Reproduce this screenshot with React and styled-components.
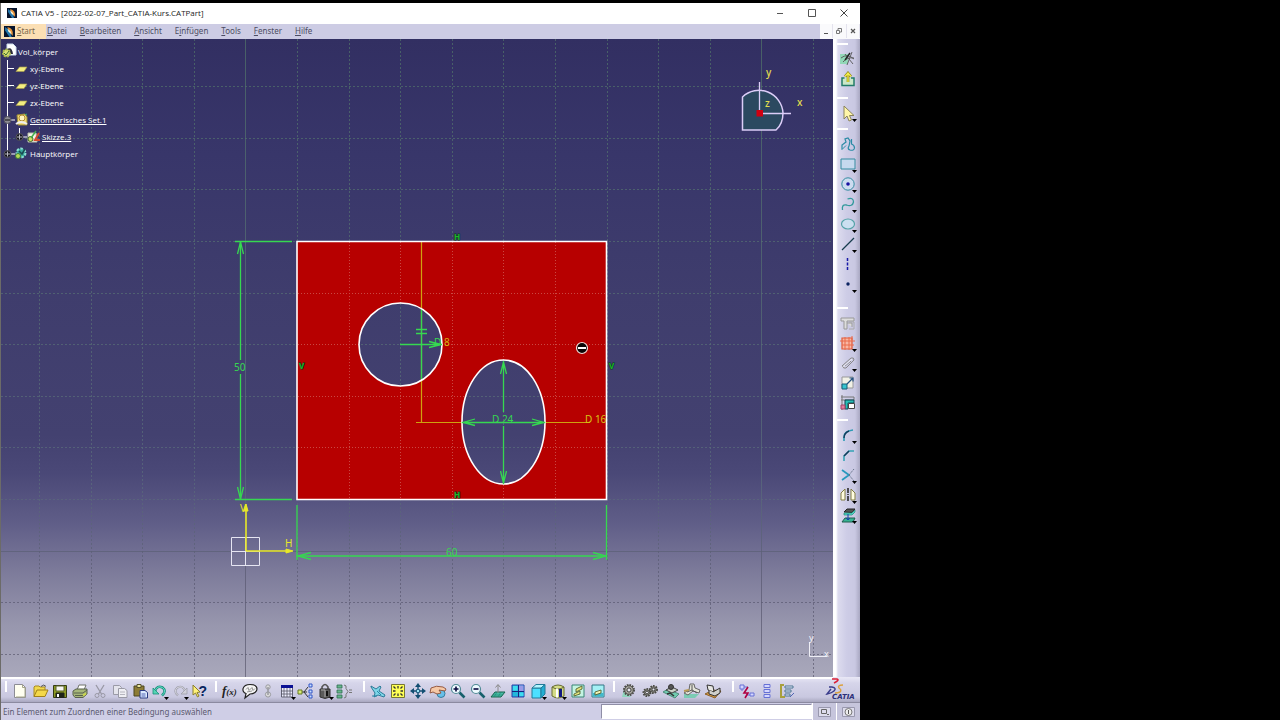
import React from "react";
import styled, { createGlobalStyle, css } from "styled-components";

const GlobalStyle = createGlobalStyle`
  * { box-sizing: border-box; }
  body { margin: 0; background: #000; font-family: "Noto Sans", "Open Sans", sans-serif; }
  button { font: inherit; color: inherit; background: none; border: 0; padding: 0; margin: 0; }
`;

const Desktop = styled.div`
  display: grid;
  grid-template-columns: 43fr 21fr;
  min-height: 100vh;
  padding-top: 3px;
  background: #000;
`;

const AppWindow = styled.div`
  display: flex;
  flex-direction: column;
  min-width: 0;
  border-left: 1px solid #6c6b68;
  background: #cfcee6;
`;

const TitleBar = styled.header`
  display: flex;
  align-items: center;
  height: 21px;
  padding: 0 0 2px 6px;
  gap: 4px;
  background: #fff;
  color: #222;
`;

const Title = styled.h1`
  flex: 1;
  margin: 0;
  font-family: "Open Sans", "Noto Sans", sans-serif;
  font-size: 8px;
  line-height: 12px;
  font-weight: 400;
  white-space: nowrap;
`;

const WindowControls = styled.div`
  display: flex;
`;

const WindowButton = styled.button`
  width: 32px;
  height: 19px;
  display: grid;
  place-items: center;
`;

const MenuBar = styled.nav`
  display: flex;
  height: 15px;
  background: #cdcce4;
  color: #4c4c62;
  font-size: 8px;
  line-height: 13px;
`;

const MenuList = styled.div`
  display: flex;
  flex: 1;
  gap: 13px;
`;

const MenuButton = styled.button`
  display: flex;
  align-items: flex-start;
  gap: 2px;
  white-space: pre;
  u { text-underline-offset: 1px; }
  ${(p) =>
    p.$active &&
    css`
      padding: 0 11px 0 3px;
      margin-right: -12px;
      background: #fbdfb4;
      color: #77664c;
      svg { margin-top: 2px; }
    `}
`;

const ChildControls = styled.div`
  display: flex;
  width: 40px;
  padding-bottom: 1px;
  background: #fafafc;
`;

const ChildButton = styled.button`
  flex: 1;
  display: grid;
  place-items: center;
  border-right: 1px solid #e4e3ee;
`;

const Workspace = styled.div`
  display: grid;
  grid-template-columns: minmax(0, 1fr) 27px;
  flex: 1;
  min-height: 638px;
`;

const Viewport = styled.main`
  position: relative;
  overflow: hidden;
  background: linear-gradient(
    #322f62 0%, #38366a 18%, #3f3d6d 40%, #434170 62%, #4a4877 68%,
    #605e88 76%, #7b7999 83%, #9897ae 92%, #a9a8bb 100%
  );
`;

const Drawing = styled.svg`
  display: block;
  width: 100%;
  height: 100%;
  text { font-family: "Noto Sans", "Open Sans", sans-serif; }
`;

const Tree = styled.ul`
  position: absolute;
  top: 4px;
  left: 0;
  margin: 0;
  padding: 0;
  list-style: none;
  color: #fff;
  font-family: "Open Sans", "Noto Sans", sans-serif;
  font-size: 8px;
  line-height: 15px;
`;

const Branch = styled.ul`
  margin: 0;
  padding: 0 0 0 ${(p) => (p.$nested ? 12 : 0)}px;
  list-style: none;
`;

const Node = styled.li`
  background: linear-gradient(#fff, #fff) 6px 0 / 1px ${(p) => (p.$last ? "50%" : "100%")} no-repeat;
  ${(p) => p.$root && css`background: none;`}
`;

const NodeRow = styled.div`
  display: flex;
  align-items: center;
  height: 17px;
  padding-left: ${(p) => (p.$root ? 0 : 2)}px;
`;

const NodeToggle = styled.button`
  width: 12px;
  height: 17px;
  display: grid;
  place-items: center start;
`;

const NodeTick = styled.span`
  width: 7px;
  height: 1px;
  margin: 0 1px 0 4px;
  background: #fff;
`;

const NodeIcon = styled.svg`
  flex: none;
  width: ${(p) => (p.$root ? 16 : 14)}px;
  height: 16px;
  margin-right: 1px;
  overflow: visible;
`;

const NodeLabel = styled.span`
  white-space: nowrap;
  text-decoration: ${(p) => (p.$underlined ? "underline" : "none")};
  text-underline-offset: 1px;
`;

const SideBar = styled.aside`
  display: grid;
  grid-template-rows: 54px 31px 179px 112px 1fr;
  padding-top: 4px;
  background: linear-gradient(90deg, #fff 0, #fff 3px, #dcdbee 5px, #cdcce6 14px, #c9c8e2 22px, #a9a8c2 27px);
`;

const SideGroup = styled.div`
  display: flex;
  flex-direction: column;
  padding: 6px 0 0 5px;
  background: linear-gradient(#fff, #fff) 4px 0 / 11px 2px no-repeat;
`;

const ToolBar = styled.div`
  display: grid;
  grid-template-columns: 210px 148px 250px 119px 1fr 32px;
  height: 26px;
  padding: 4px 2px 0 4px;
  border-bottom: 1px solid #8b8aa0;
  background:
    linear-gradient(#fff, #fff) 0 0 / calc(100% - 27px) 2px no-repeat,
    linear-gradient(#e9e8f6 0, #d6d5ea 6px, #c9c8e0 20px, #a9a8c0 25px);
`;

const ToolGroup = styled.div`
  display: flex;
  align-items: flex-start;
  padding-left: 5px;
  background: linear-gradient(#fff, #fff) 0 0 / 2px 11px no-repeat;
`;

const ToolButton = styled.button`
  display: grid;
  place-items: center;
  flex: none;
  width: ${(p) => p.$w || 20}px;
  height: 20px;
`;

const ToolIcon = styled.svg`
  display: block;
  width: 18px;
  height: 18px;
  overflow: visible;
`;

const Logo = styled.svg`
  width: 32px;
  height: 22px;
  overflow: visible;
`;

const StatusBar = styled.footer`
  display: flex;
  align-items: center;
  height: 17px;
  padding-left: 2px;
  background: #cfcee6;
  color: #5b5a70;
  font-size: 8px;
  line-height: 16px;
`;

const StatusText = styled.label`
  flex: 1;
  white-space: nowrap;
`;

const CommandInput = styled.input`
  flex: 0 1 211px;
  min-width: 0;
  height: 15px;
  padding: 0 4px;
  border: 1px solid #8f8ea6;
  border-right-color: #fff;
  border-bottom-color: #fff;
  background: #fff;
  font: inherit;
`;

const StatusButton = styled.button`
  display: grid;
  place-items: center;
  width: 24px;
  height: 17px;
  border-left: 1px solid #fff;
  background: #c6c5dc;
`;

/* Toolbar drawings, all on an 18 x 18 field */

const S = ({ c = "#222", w = 1, f = "none", d, ...rest }) => (
  <path d={d} stroke={c} strokeWidth={w} fill={f} {...rest} />
);

const Gear = ({ x, y, r }) => (
  <g>
    <circle cx={x} cy={y} r={r} fill="#c4c4bc" stroke="#4a4a46" strokeWidth="2" strokeDasharray="1.6 1" />
    <circle cx={x} cy={y} r={r - 0.8} fill="#b4b3aa" stroke="#4c4c48" strokeWidth="1" />
    <circle cx={x} cy={y} r={r / 2.4} fill="#e6e6ee" stroke="#3a3a38" />
  </g>
);

const Lens = ({ plus }) => (
  <g>
    <S d="M10.500 10.500l5 5" c="#17606c" w="2.6" />
    <circle cx="7" cy="7" r="4.5" fill="#eefaff" stroke="#4f8a94" strokeWidth="1.2" />
    <S d={plus ? "M4.500 7h5M7 4.500v5" : "M4.500 7h5"} c="#06063c" w="1.6" />
  </g>
);

const icons = {
  neu: <><S d="M3.500 2.500h8l3 3v10h-11z" f="#fffff0" c="#8c8c94" /><S d="M11.500 2.500v3h3M5 15h9V6" c="#a5a58a" /></>,
  open: <><S d="M3 14.500V5l1-1h4l1 1h5v3" f="#f1d94c" c="#a88a20" /><S d="M3 14.500l3-6.500h11l-3 6.500z" f="#f4d848" c="#a08018" /><S d="M10 4.500q3-3 5 0" c="#555" /></>,
  save: <><S d="M2.500 3.500h13v12h-13z" f="#8c9a23" c="#343b16" /><S d="M5 4h8v5H5z" f="#f5f5f0" c="#58602c" /><S d="M5 11h8v4.500H5z" f="#1e2418" c="#1e2418" /><S d="M7 12v3" c="#fff" w="2" /></>,
  print: <><S d="M6 8l2-5h7l-2 5z" f="#fff" c="#70746c" /><S d="M2 9l3-2h11v5l-4 3.500H4L2 13z" f="#a6b77a" c="#59614c" /><S d="M3 11h9l4-3M4 13.500h8" c="#59614c" /><S d="M12 13.500l3-2" c="#cdd84c" w="2" /></>,
  cut: <><S d="M5 3l5.500 9M13 3L7.500 12" c="#9998a5" w="1.300" /><circle cx="6" cy="13.500" r="2" stroke="#9998a5" fill="none" /><circle cx="12" cy="13.500" r="2" stroke="#9998a5" fill="none" /></>,
  copy: <><S d="M2.500 3.500h6l2 2v7h-8z" f="#e4e4ec" c="#9a9aa6" /><S d="M7.500 6.500h6l2.500 2v7H7.500z" f="#efeff4" c="#9a9aa6" /><S d="M9 10h5M9 12.500h5" c="#b5b5be" /></>,
  paste: <><S d="M3 4h10v10H3z" f="#8d7c35" c="#4d461f" /><S d="M6 2.500h4v3H6z" f="#ebe7a0" c="#55502c" /><S d="M9 8.500h5l2.500 2v5.500H9z" f="#dbe9ff" c="#2b3b83" /><S d="M10.500 12h4M10.500 14h4" c="#5265b5" /></>,
  undo: <><S d="M4 9q2-6 7.500-3.500Q16 9 11 13.500" c="#1a8f7c" w="2.600" /><S d="M4 9q2-6 7.500-3.500Q16 9 11 13.500" c="#67e2c9" /><S d="M2 6v6h6z" f="#56d6b5" c="#1a8f7c" w=".8" /></>,
  redo: <><S d="M14 9Q12 3 6.500 5.500 2 9 7 13.500" c="#9e9eaa" w="2.200" /><S d="M14 9Q12 3 6.500 5.500 2 9 7 13.500" c="#e3e3ec" w=".8" /><S d="M16 6v6h-6z" f="#d0d0da" c="#9e9eaa" w=".8" /></>,
  help: <><S d="M2 3v10l2.500-2 2 4 1.500-1-2-3.500 3-.5z" f="#fff27a" c="#8a7e30" /><text x="7.500" y="13.500" fontSize="14" fontWeight="700" fill="#07255f" fontFamily="Liberation Sans, sans-serif">?</text></>,

  formula: <text x="1" y="13" fontSize="13" fontStyle="italic" fontWeight="700" fill="#222" fontFamily="Liberation Serif, serif">f<tspan fontSize="9">(x)</tspan></text>,
  comment: <><S d="M10 2.500c5 0 7 2 7 4.500S14 12 10 12l-5 4 1-4.500C1 10 2 2.500 10 2.500z" f="#f5f5f5" c="#222" w="1.200" /><S d="M6 7.500l2-2 1 3 3-3 1 3 2-2M7 10l5-1" c="#777" w=".8" /></>,
  chain: <><circle cx="9" cy="5" r="2.200" fill="#ddd" stroke="#999aa0" /><circle cx="9" cy="12.500" r="2.600" fill="#ddd" stroke="#999aa0" /><S d="M9 5v8" c="#999aa0" w="1.500" /></>,
  table: <><S d="M3.500 4h11v11h-11z" f="#eef" c="#445" w=".8" /><S d="M3 4.500h12" c="#0a1094" w="3" /><S d="M3 9h12M3 12h12M6 6v9M9 6v9M12 6v9" c="#556" w=".8" /></>,
  relations: <><S d="M5 10h5M7 10l4-5M7 10l4 5" c="#333" /><S d="M1 8h4v4H1z" f="#d8ec76" c="#667b22" /><S d="M12 2h3v3h-3zM12 8h3v3h-3zM12 13h3v3h-3z" f="#cadfff" c="#3155c6" /></>,
  lock: <><S d="M6 8V5q3-5 6 0v3" c="#555" w="1.600" /><S d="M4 7h10v8l-5 1.500L4 15z" f="#5a5a5a" c="#333" /><S d="M5 8h4v7" c="#aaa" /><S d="M11 9v5" c="#111" w="2" /></>,
  struct: <><S d="M2 3h5v3H2zM2 8h5v3H2zM2 13h5v3H2z" f="#67b68c" c="#2d6c52" w=".8" /><S d="M9 3q3 0 2 3.500l2 3-2 3q1 3.500-2 3.500M14 8h3M14 10.500h3" c="#777" /></>,

  fly: <><S d="M2 4l5 3 4-3 1 1-2 4 6 4-1 2-6-2-4 2 1-4-4-6z" f="#7ed6e8" c="#206f8f" w=".9" /><S d="M3 14h5M8 9l4 4" c="#2a87a8" /></>,
  fit: <><S d="M2.500 2.500h13v13h-13z" f="#ffff55" c="#777733" /><S d="M4.500 4.500l2 2M13.500 4.500l-2 2M4.500 13.500l2-2M13.500 13.500l-2-2M9 4v2.500M9 11.500V14M4 9h2.500M11.500 9H14" c="#333" w="1.300" /></>,
  pan: <><S d="M9 3v12M3 9h12" c="#124e72" w="1.400" /><S d="M9 1l3 4H6zM9 17l3-4H6zM1 9l4-3v6zM17 9l-4-3v6z" f="#124e72" c="none" /><S d="M7.500 7.500h3v3h-3z" f="#9fe6f5" c="#124e72" w=".8" /></>,
  rotate: <><circle cx="12" cy="11.500" r="4" fill="#67bfe9" stroke="#347c9d" w=".8" /><S d="M2 6q5-3 12-1l3 2-1 2-6-1 2 3-4 1-4-2-3 1z" f="#f5c8a6" c="#8c4e35" w=".9" /></>,
  zoomIn: <Lens plus />,
  zoomOut: <Lens />,
  normal: <><S d="M2 15l4-5h10l-4 5z" f="#46bba4" c="#18634f" /><S d="M4 13h10M8 10l-3 5M12 10l-3 5" c="#1d8872" w=".6" /><S d="M9 11V3M6.500 5.500L9 2.500l2.500 3" c="#888" /></>,
  multi: <><S d="M3 3h12v12H3z" f="#22b8dc" c="#2a3fa8" /><S d="M10 3.500h4.500v6H10z" f="#9a9ae6" c="none" /><S d="M9.500 3v12M3 9.500h12" c="#17247f" /><S d="M4 4h4.500v4.500H4zM10.500 10.500h4V14h-4z" f="#3fdcf0" c="none" /></>,
  cube: <><S d="M3 6h9v10H3z" f="#4ce0ff" c="#237a98" /><S d="M3 6l4-3.500h9L12 6z" f="#b4f5ff" c="#237a98" /><S d="M12 6l4-3.500V12l-4 4z" f="#24aed2" c="#237a98" /></>,
  shade: <><S d="M3 5v9q6 4 12 0V5q-6-4-12 0z" f="#d4dc86" c="#676b35" /><S d="M3 5q6 4 12 0" c="#676b35" /><S d="M7 6.500h2v9H7z" f="#fff" c="none" /><S d="M10 7h3v8h-3z" f="#121880" c="none" /></>,
  hide: <><S d="M3 3h12v12H3z" f="#c4f4e2" c="#398577" /><S d="M7 7l6-3v3l-6 3zM5 12l6-3v3l-6 2z" f="#e6e67e" c="#53622f" w=".9" /></>,
  swap: <><S d="M3 3h12v12H3z" f="#a4f1f5" c="#347786" /><S d="M3.500 11h11v3.500h-11z" f="#42b8ca" c="none" /><S d="M6 10l6-2v3l-6 2z" f="#f2f3b2" c="#53622f" w=".9" /></>,

  gear: <><S d="M4 7l-2 8h9z" f="#8fd6bd" c="none" /><Gear x={9} y={8} r={5} /></>,
  gears: <><Gear x={6} y={10.5} r={3.5} /><Gear x={12.5} y={7.5} r={3.5} /></>,
  machine: <><S d="M1 10l5-3 11 5-4 4z" f="#70cbb0" c="#4f8c7b" /><S d="M4 8l6-3 6 3-6 3z" f="#ccd2c8" c="#444" /><circle cx="9" cy="5" r="2.500" fill="#555" stroke="#333" /><S d="M5 12l3-1 4 3" c="#333" w="1.500" /></>,
  assemble: <><S d="M1 12h15l-4 4H1z" f="#7cccb4" c="none" /><S d="M7 2h4l1 4 5 2-1 3-6-2-5 4-4-2 5-3z" f="#e3e4d8" c="#666" /><S d="M9 3v5M4 10l5-2 5 3" c="#555" /><S d="M1 9l5-1" c="#b79a55" w="2" /></>,
  part: <><S d="M1 12l8-4 8 1-6 7z" f="#d99a40" c="#8a6028" /><S d="M3 3l6 1 1 6-6-2z" f="#e6e6e2" c="#333" /><S d="M9 10l7-4v5l-5 3-6-2v-4" f="#cfcfca" c="#333" /></>,
  net: <><S d="M2 3h4v4H2zM12 11h4v3h-4z" f="#d5d7ff" c="#6671d5" /><S d="M6 5h4M4 7v2M8 13h4" c="#6671d5" /><S d="M10 5L6 11h4l-3 5" c="#b00040" w="1.600" /></>,
  stack: <S d="M6 2.500h6v3H6zM6 7.500h6v3H6zM6 12.500h6v3H6z" f="#d5d7ff" c="#6671d5" />,
  list: <><S d="M6 3H3v12h4" f="none" c="#a8a03c" w="2" /><S d="M7 4h8v2H7zM7 8h6v2H7zM7 12h5v2H7z" f="#e8ecff" c="#4a7590" /><S d="M12 15l4-4" c="#5165b5" /></>,

  sketch: <><S d="M1 4h8v10H1z" f="#92d8b8" c="none" /><S d="M2 8q6-5 13 1M4 12q4-5 11-4M13 2L8 15M6 4l8 10" c="#555" w=".9" /><S d="M11 3l-5 7" c="#222" w="1.400" /></>,
  exit: <><S d="M5.500 8H3v7.500h12V8h-3" f="#cbe8c8" c="#237c6a" w="1.500" /><S d="M9 12V4M6 6.500L9 3l3 3.500" c="#877d0e" w="2.600" /><S d="M9 12V4M6 6.500L9 3l3 3.500" c="#f3ee4c" w="1.300" /></>,
  select: <S d="M5 2v13l3-3 2 5 2.500-1-2-4.500H15z" f="#fff6a8" c="#8a835d" />,
  profile: <><S d="M3 14.500V10l4-3-1-3 3-1 2 3-1 5q-2 3 1 4 4 1 4.500-2 0-3-3-4V4" c="#2a8ba5" w="1.200" /><S d="M3 14.500l4-4" c="#2a8ba5" /></>,
  rect: <S d="M2 4h14v10H2z" f="#c6d9ee" c="#348ba0" />,
  circle: <><circle cx="9" cy="9" r="6.200" fill="#cddcf0" stroke="#348ba0" /><circle cx="9" cy="9" r="1.800" fill="#1810a0" /></>,
  spline: <S d="M3.500 15q-1-6 4-5 6 2 7-3 0-5-6-3" c="#339a9c" w="1.300" />,
  ellipse: <ellipse cx="9" cy="9" rx="6.500" ry="5" fill="#cbdff0" stroke="#55a3a8" strokeWidth="1.200" />,
  line: <S d="M3 15L15 3" c="#173c4d" w="1.300" />,
  axis: <S d="M8.500 3v3M8.500 7.500v3M8.500 12v3" c="#1718a8" w="1.500" />,
  point: <circle cx="9" cy="9" r="1.700" fill="#0b2360" />,
  constraint: <><S d="M2 4h13v3H8v8H5V7H2zM8 9h5v4" c="#999" f="#ddd" /><S d="M10 8h5v7h-5" c="#aaa" /></>,
  anchor: <><S d="M3 4h10v11H3z" f="#f8b7a4" c="#e05a3a" w="1.200" /><S d="M1 7h15M6 3v13M10 3v13M3 11h12M13 2v4" c="#ea6b4a" /></>,
  clip: <><S d="M3 12L12 4q3-1 3 2L7 14q-3 1-3-2zM6 12l6-5" c="#888" /><S d="M4 13l9-8" c="#f2f2f6" w=".8" /></>,
  project: <><S d="M3 3h11v11H3z" f="#f1f1e6" c="#999" /><S d="M3 10h5v5H3z" f="#35c4ce" c="#175e78" /><S d="M8 10l6-6M10.500 4H14v3.500" c="#225080" w="1.200" /></>,
  analyse: <><S d="M2 3h13M2 6h13M3 1v15M15 3v3" c="#777" /><S d="M6 6h9v3H9v6H6z" f="#28bfb5" c="#145" /><S d="M9.500 9.500h6v5h-6z" f="#fff" c="#444" /><S d="M2 11h4v4H2z" f="#e37c9c" c="#a34468" /></>,
  corner: <><S d="M5 15V11q0-6 9-7" c="#2d9bb5" w="1.600" /><S d="M5 12q0-5 5-7" c="#123c5c" w="1.400" /></>,
  chamfer: <><S d="M5 15v-5l5-5h5" c="#36a3b5" w="1.600" /><S d="M5 10l5-5" c="#173959" w="1.400" /></>,
  trim: <><S d="M3 4l7 5-7 5" c="#2798bd" w="1.700" /><S d="M10 9l5-6M10 9l5 6" c="#68748b" strokeDasharray="2 1" /></>,
  mirror: <><S d="M2 14V7l4-4v11zM16 14V7l-4-4v11z" f="#fffce0" c="#817c45" /><S d="M9 2v14" c="#222" w="1.500" strokeDasharray="5 1 1 1" /></>,
  offset: <><S d="M3 16l3-4h10l-2 4z" f="#37b393" c="#205e4f" /><S d="M5 6l3-3h8l-3 3.500z" f="#555" c="#222" /><S d="M5 7h8l3-3v2l-3 3H5z" f="#52dccb" c="#287" w=".7" /><S d="M9 8v6M7 12l2 2 2-2" c="#1640b0" /></>,
};

const MORE = new Set([
  "undo", "redo", "table", "lock", "cube", "shade", "select", "rect", "circle",
  "spline", "ellipse", "line", "point", "anchor", "clip", "corner", "trim", "mirror", "offset",
]);

const Tool = ({ name, width }) => (
  <ToolButton type="button" aria-label={name} $w={width}>
    <ToolIcon viewBox="0 0 18 18" aria-hidden="true">
      {icons[name]}
      {MORE.has(name) && <path d="M13 15h5l-2.500 3z" fill="#000" />}
    </ToolIcon>
  </ToolButton>
);

const bottomGroups = [
  [20, ["neu", "open", "save", "print", "cut", "copy", "paste", "undo", "redo", "help"]],
  [19, ["formula", "comment", "chain", "table", "relations", "lock", "struct"]],
  [20, ["fly", "fit", "pan", "rotate", "zoomIn", "zoomOut", "normal", "multi", "cube", "shade", "hide", "swap"]],
  [21, ["gear", "gears", "machine", "assemble", "part"]],
  [20, ["net", "stack", "list"]],
];

const sideGroups = [
  ["sketch", "exit"],
  ["select"],
  ["profile", "rect", "circle", "spline", "ellipse", "line", "axis", "point"],
  ["constraint", "anchor", "clip", "project", "analyse"],
  ["corner", "chamfer", "trim", "mirror", "offset"],
];

const AppIcon = ({ size = 10 }) => (
  <svg width={size} height={size} viewBox="0 0 10 10" aria-hidden="true">
    <rect width="10" height="10" fill="#07142c" />
    <path d="M1 1l4 3 2 6H5L1 4z" fill="#2378ae" />
    <path d="M3 1q6 1 5 8L5 5z" fill="#e8943a" />
    <path d="M3 2l3 3 1 3-3-3z" fill="#fff6d8" />
  </svg>
);

/* Specification tree */

const treeIcons = {
  part: (
    <>
      <path d="M6 0h6l3 3v8H6z" fill="#fff" stroke="#cfe0ee" />
      <path d="M6 5q5-3 6 5H8z" fill="#2c2c3c" />
      <circle cx="5.500" cy="9" r="3.500" fill="#d8df72" stroke="#a9b84a" strokeWidth="2" strokeDasharray="2 1" />
      <path d="M3 9l2 2 3-4" stroke="#3e6c31" fill="none" />
    </>
  ),
  plane: <path d="M4.500 6h7.500l-3 4.500H1z" fill="#f4ee80" stroke="#a3994d" strokeWidth=".7" />,
  set: (
    <>
      <path d="M2 3l8-1 2 3v8H3z" fill="#f6dd77" stroke="#9b8a34" />
      <circle cx="7" cy="6" r="3" fill="#fff3c0" stroke="#b28a30" />
      <path d="M1 12q5-4 11 0" stroke="#eee" strokeWidth="2" fill="none" />
      <path d="M10 3l2-1" stroke="#3cb371" />
    </>
  ),
  sketch: (
    <>
      <path d="M1 4h8l1 9H1z" fill="#f4f4e8" stroke="#b9bfa9" />
      <path d="M12 4L8 11h5" stroke="#d44b30" strokeWidth="2" fill="none" />
      <circle cx="3.500" cy="10" r="2.500" fill="#cfdd66" stroke="#416b2a" />
      <path d="M4 9l5-7" stroke="#3fae4c" strokeWidth="1.500" />
    </>
  ),
  body: (
    <>
      <circle cx="6" cy="7" r="4.500" fill="#39a79b" stroke="#8ee0d2" strokeWidth="2" strokeDasharray="2.500 1.500" />
      <path d="M4 5l3 3 3-5" stroke="#184a52" strokeWidth="1.500" fill="none" />
      <circle cx="3" cy="10" r="2.500" fill="#b5db55" stroke="#3b7a38" />
    </>
  ),
};

const Expander = ({ open, label }) => (
  <NodeToggle type="button" aria-label={label} aria-expanded={open}>
    <svg width="12" height="10" viewBox="0 0 12 10" aria-hidden="true">
      <path d="M7 5h5" stroke="#fff" />
      <circle cx="4.500" cy="5" r="3.500" fill={open ? "#8a8a92" : "#15151f"} stroke="#55555f" />
      <path d={open ? "M2 5h5" : "M2 5h5M4.500 2.500v5"} stroke={open ? "#111" : "#b8b8c0"} />
    </svg>
  </NodeToggle>
);

const TreeItem = ({ icon, label, last, underlined, open, leaf, children }) => (
  <Node $last={last}>
    <NodeRow>
      {leaf ? <NodeTick /> : <Expander open={!!open} label={label} />}
      <NodeIcon viewBox="0 0 14 16" aria-hidden="true">{treeIcons[icon]}</NodeIcon>
      <NodeLabel $underlined={underlined}>{label}</NodeLabel>
    </NodeRow>
    {children}
  </Node>
);

/* Sketch geometry */

const STEP = 51.6;
const columns = Array.from({ length: 16 }, (_, i) => Math.floor(39.4 + i * STEP) + 0.5);
const rows = Array.from({ length: 12 }, (_, i) => Math.round(86.2 + i * STEP) + 0.5);
const GREEN = "#36d850";
const PLATE = "M297 241.500h309.500v258H297z";
const CIRCLE = "M359 344.500a41.500 41.500 0 1 0 83 0a41.500 41.500 0 1 0 -83 0z";
const OVAL = "M462 422a41.500 62 0 1 0 83 0a41.500 62 0 1 0 -83 0z";

const SketchView = () => (
  <Drawing viewBox="1 39 832 638" preserveAspectRatio="xMinYMin slice" role="img" aria-label="Skizze.3">
    <defs>
      <linearGradient id="gridInk" gradientUnits="userSpaceOnUse" x1="0" y1="39" x2="0" y2="677">
        <stop offset="0" stopColor="#4f7068" />
        <stop offset="0.700" stopColor="#5a6a7c" />
        <stop offset="0.850" stopColor="#5c5b74" />
        <stop offset="1" stopColor="#5f5e72" />
      </linearGradient>
      <clipPath id="plateClip">
        <path d={PLATE + CIRCLE + OVAL} clipRule="evenodd" />
      </clipPath>
    </defs>

    <path d={PLATE + CIRCLE + OVAL} fill="#b70000" fillRule="evenodd" />
    <g fill="none" stroke="url(#gridInk)">
      {columns.map((x, i) => (
        <path key={x} d={`M${x} 39L${x + 0.01} 677`} strokeDasharray={i === 4 || i === 14 ? "none" : "2 2"} opacity=".75" />
      ))}
      {rows.map((y, i) => (
        <path key={y} d={`M1 ${y}L833 ${y + 0.01}`} strokeDasharray={i === 9 ? "none" : "2 2"} opacity=".75" />
      ))}
    </g>
    <g clipPath="url(#plateClip)">
      <path d={PLATE} fill="#b70000" />
      <g stroke="#d77a70" strokeDasharray="1 2" opacity=".6">
        {columns.slice(6, 11).map((x) => <path key={x} d={`M${x} 242V499`} />)}
        {rows.slice(4, 8).map((y) => <path key={y} d={`M298 ${y}H606`} />)}
      </g>
    </g>
    <path d="M421.500 242V422.500M416 422.500H462M545 422.500H590" stroke="#cfa210" strokeWidth="1.200" />
    <path d="M421.500 309V379" stroke={GREEN} strokeWidth="1.300" />
    <path d={PLATE + CIRCLE + OVAL} fill="none" stroke="#fff" strokeWidth="1.600" />

    <g stroke={GREEN} fill="none" strokeWidth="1.300">
      <path d="M235 241.500H292M235 499.500H292M240.500 241V360M240.500 374V499" />
      <path d="M237.500 254L240.500 242L243.500 254M237.500 487L240.500 499L243.500 487" />
      <path d="M297 505V560M606.500 505V560M297 556H606" />
      <path d="M311 552.500L298 556L311 559.500M593 552.500L606 556L593 559.500" />
      <path d="M400 344.500H442M429 341.500L441 344.500L429 347.500" />
      <path d="M416 329.500H427M416 333.500H427" strokeWidth="1.500" />
      <path d="M462 422.500H545M475 419L463 422.500L475 425.500M532 419L544 422.500L532 425.500" />
      <path d="M503.500 361V412M503.500 426V484M500.500 374L503.500 362L506.500 374M500.500 471L503.500 483L506.500 471" />
    </g>

    <g fill={GREEN} fontSize="10">
      <text x="234" y="371">50</text>
      <text x="446" y="556">60</text>
      <text x="492" y="423">D 24</text>
      <text x="434" y="346">D <tspan fill="#d6b410">8</tspan></text>
      <text x="585" y="423" fill="#d6c514">D 16</text>
    </g>
    <g fill="#1fb52c" stroke="#073d18" strokeWidth="1" paintOrder="stroke" fontSize="8" fontWeight="700">
      <text x="454" y="240">H</text>
      <text x="454" y="498">H</text>
      <text x="299" y="369">V</text>
      <text x="609" y="369">V</text>
    </g>

    <path d="M231.500 537.500H259.500V565.500H231.500zM245.500 537V565M231 551.500H259" stroke="#e6e5f2" fill="none" />
    <g stroke="#e8e828" fill="#e8e828">
      <path d="M246 551V506M246 551H291" strokeWidth="1.600" />
      <path d="M246 504l2 7h-4zM293 551l-7 2v-4z" strokeWidth="1" />
    </g>
    <g fill="#e8e828" fontSize="10">
      <text x="240" y="512">V</text>
      <text x="285" y="547">H</text>
    </g>

    <path d="M742.500 97A24 24 0 0 1 783 113Q783 124 776 130H742.500z" fill="#2b4960" stroke="#dccdf8" strokeWidth="1.500" />
    <path d="M759.500 113V82M759 113.500H791" stroke="#dccdf8" strokeWidth="1.300" />
    <rect x="756.500" y="110" width="6.500" height="6.500" fill="#d00010" />
    <g fill="#e3df4d" fontSize="10" fontWeight="500">
      <text x="766" y="76">y</text>
      <text x="797" y="106">x</text>
      <text x="765" y="107">z</text>
    </g>

    <path d="M809.500 642V656.500H827" stroke="#eeeef5" fill="none" />
    <g fill="#f4f4fa" fontSize="9">
      <text x="809" y="641">y</text>
      <text x="824" y="657">x</text>
    </g>

    <circle cx="582" cy="348" r="5.500" fill="#0a0505" stroke="#f3dcd8" strokeWidth="1.200" />
    <path d="M578 348H586" stroke="#fff" strokeWidth="2" />
  </Drawing>
);

const menus = [
  ["", "D", "atei"],
  ["", "B", "earbeiten"],
  ["", "A", "nsicht"],
  ["E", "i", "nfügen"],
  ["", "T", "ools"],
  ["", "F", "enster"],
  ["", "H", "ilfe"],
];

export default function App() {
  return (
    <Desktop>
      <GlobalStyle />
      <AppWindow>
        <TitleBar>
          <AppIcon />
          <Title>CATIA V5 - [2022-02-07_Part_CATIA-Kurs.CATPart]</Title>
          <WindowControls>
            <WindowButton type="button" aria-label="Minimieren">
              <svg width="8" height="8"><path d="M1 4.500h6" stroke="#555" /></svg>
            </WindowButton>
            <WindowButton type="button" aria-label="Maximieren">
              <svg width="8" height="8"><path d="M.5.5h7v7h-7z" stroke="#555" fill="none" /></svg>
            </WindowButton>
            <WindowButton type="button" aria-label="Schließen">
              <svg width="8" height="8"><path d="M.5.5l7 7M7.500.5l-7 7" stroke="#444" /></svg>
            </WindowButton>
          </WindowControls>
        </TitleBar>

        <MenuBar>
          <MenuList>
            <MenuButton type="button" $active>
              <AppIcon size={11} />
              <span><u>S</u>tart</span>
            </MenuButton>
            {menus.map(([pre, key, post]) => (
              <MenuButton type="button" key={post}>
                <span>{pre}<u>{key}</u>{post}</span>
              </MenuButton>
            ))}
          </MenuList>
          <ChildControls>
            <ChildButton type="button" aria-label="Fenster minimieren">
              <svg width="6" height="6"><path d="M1 5.500h4" stroke="#555" /></svg>
            </ChildButton>
            <ChildButton type="button" aria-label="Fenster wiederherstellen">
              <svg width="6" height="6"><path d="M.5 2.500h3v3h-3zM2 2V.5h3.500V4H4" stroke="#777" fill="none" /></svg>
            </ChildButton>
            <ChildButton type="button" aria-label="Fenster schließen">
              <svg width="6" height="6"><path d="M1 1l4 4M5 1L1 5" stroke="#555" strokeWidth="1.200" /></svg>
            </ChildButton>
          </ChildControls>
        </MenuBar>

        <Workspace>
          <Viewport>
            <SketchView />
            <Tree>
              <Node $root>
                <NodeRow $root>
                  <NodeIcon $root viewBox="0 0 16 16" aria-hidden="true">{treeIcons.part}</NodeIcon>
                  <NodeLabel>Vol_körper</NodeLabel>
                </NodeRow>
                <Branch>
                  <TreeItem leaf icon="plane" label="xy-Ebene" />
                  <TreeItem leaf icon="plane" label="yz-Ebene" />
                  <TreeItem leaf icon="plane" label="zx-Ebene" />
                  <TreeItem open icon="set" label="Geometrisches Set.1" underlined>
                    <Branch $nested>
                      <TreeItem last icon="sketch" label="Skizze.3" underlined />
                    </Branch>
                  </TreeItem>
                  <TreeItem last icon="body" label="Hauptkörper" />
                </Branch>
              </Node>
            </Tree>
          </Viewport>
          <SideBar>
            {sideGroups.map((names) => (
              <SideGroup key={names[0]}>
                {names.map((name) => <Tool key={name} name={name} />)}
              </SideGroup>
            ))}
          </SideBar>
        </Workspace>

        <ToolBar>
          {bottomGroups.map(([width, names]) => (
            <ToolGroup key={names[0]}>
              {names.map((name) => <Tool key={name} name={name} width={width} />)}
            </ToolGroup>
          ))}
          <Logo viewBox="0 0 32 22" role="img" aria-label="CATIA">
            <path d="M6 -2h5q3 1-3 4" stroke="#dc2038" strokeWidth="1.600" fill="none" />
            <path d="M3 6h3q5 1 2 4-2 2-7 3L5 8" stroke="#3a3c8c" strokeWidth="1.400" fill="none" />
            <path d="M17 4q-6 0-4 3 3 2 1 4-2 1-5 1" stroke="#dda23e" strokeWidth="1.500" fill="none" />
            <text x="6" y="18" fontSize="7" fontWeight="700" fontStyle="italic" fill="#2c2f78" fontFamily="DejaVu Sans, sans-serif">CATIA</text>
          </Logo>
        </ToolBar>

        <StatusBar>
          <StatusText htmlFor="command">Ein Element zum Zuordnen einer Bedingung auswählen</StatusText>
          <CommandInput id="command" type="text" />
          <StatusButton type="button" aria-label="Dialog">
            <svg width="13" height="10"><path d="M.5.5h12v9H.5z" fill="#dddcec" stroke="#9998ae" /><path d="M3.500 2.500h5v4h-5zM9 7.500h2" fill="none" stroke="#666" /></svg>
          </StatusButton>
          <StatusButton type="button" aria-label="Info">
            <svg width="13" height="10"><path d="M.5.5h12v9H.5z" fill="#dddcec" stroke="#9998ae" /><circle cx="6.500" cy="5" r="3.500" fill="#eee" stroke="#777" /><path d="M6.500 3v4" stroke="#555" /></svg>
          </StatusButton>
        </StatusBar>
      </AppWindow>
    </Desktop>
  );
}
